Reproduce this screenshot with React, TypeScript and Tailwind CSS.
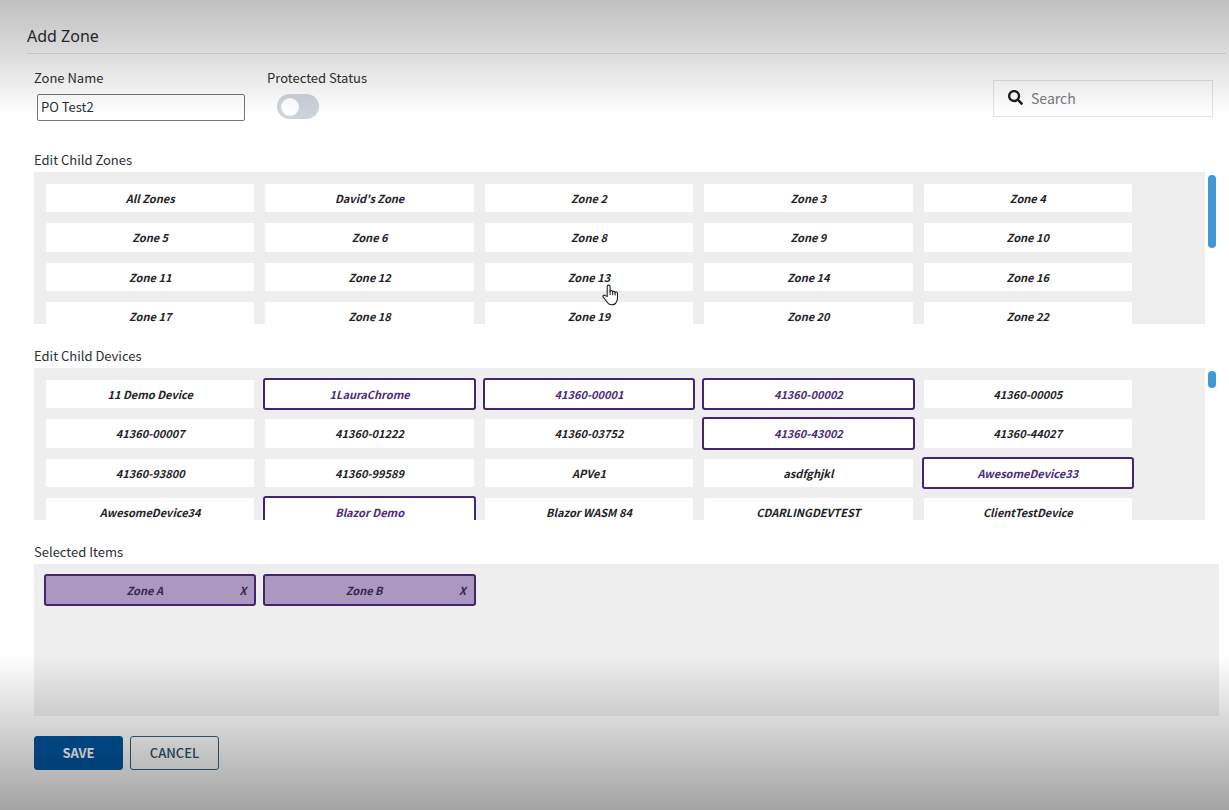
import { useState } from "react";
import type { ReactNode } from "react";
import { FaSearch } from "react-icons/fa";

const zones = [
  "All Zones", "David's Zone", "Zone 2", "Zone 3", "Zone 4",
  "Zone 5", "Zone 6", "Zone 8", "Zone 9", "Zone 10",
  "Zone 11", "Zone 12", "Zone 13", "Zone 14", "Zone 16",
  "Zone 17", "Zone 18", "Zone 19", "Zone 20", "Zone 22",
];

const devices = [
  "11 Demo Device", "1LauraChrome", "41360-00001", "41360-00002", "41360-00005",
  "41360-00007", "41360-01222", "41360-03752", "41360-43002", "41360-44027",
  "41360-93800", "41360-99589", "APVe1", "asdfghjkl", "AwesomeDevice33",
  "AwesomeDevice34", "Blazor Demo", "Blazor WASM 84", "CDARLINGDEVTEST", "ClientTestDevice",
];

const initialDevices = ["1LauraChrome", "41360-00001", "41360-00002", "41360-43002", "AwesomeDevice33", "Blazor Demo"];

function Tile({ label, active, onClick }: { label: string; active: boolean; onClick: () => void }) {
  return (
    <button
      type="button"
      aria-pressed={active}
      onClick={onClick}
      className={
        "min-w-0 cursor-pointer truncate rounded-[3px] border-2 bg-white bg-clip-padding text-[11px] font-bold italic leading-4 " +
        (active ? "border-[#42246f] text-[#4b2c7c]" : "border-transparent text-[#1f2427]")
      }
    >
      {label}
    </button>
  );
}

function Picker({ title, items, initial, thumb }: { title: string; items: string[]; initial: string[]; thumb: ReactNode }) {
  const [picked, setPicked] = useState(initial);
  const toggle = (item: string) =>
    setPicked((list) => (list.includes(item) ? list.filter((i) => i !== item) : [...list, item]));

  return (
    <section className="mb-5 mr-[13px]">
      <h2 className="text-[13px] leading-6">{title}</h2>
      <div className="flex gap-[3px]">
        <div className="h-[152px] flex-1 overflow-hidden bg-[#eeeeee] pl-[10px] pr-[71px] pt-[10px]">
          <div className="grid h-[150px] auto-rows-fr grid-cols-5 gap-[7px]">
            {items.map((item) => (
              <Tile key={item} label={item} active={picked.includes(item)} onClick={() => toggle(item)} />
            ))}
          </div>
        </div>
        <div className="w-2 pt-[3px]" aria-hidden="true">
          {thumb}
        </div>
      </div>
    </section>
  );
}

function HandCursor() {
  return (
    <svg
      className="pointer-events-none absolute left-[602px] top-[284px] h-[22px] w-[17px]"
      viewBox="0 0 17 22"
      fill="white"
      stroke="#222"
      strokeWidth="1.1"
      strokeLinejoin="round"
      strokeLinecap="round"
      aria-hidden="true"
    >
      <path d="M5.2 12.4V2.6c0-2 2.9-2 2.9 0v4.7c.4-1 2.5-.9 2.6.5.5-.9 2.3-.7 2.4.6.8-.8 2.4-.4 2.4 1.2v4.6c0 2-.8 2.7-1.3 4.1-.7 1.8-2.2 2.500-4.300 2.500-2.200 0-3.500-.7-4.500-2.300L1.300 13.200c-.8-1.300.5-2.700 1.900-1.700z" />
      <path d="M8.1 7.3v3.2M10.7 7.8v2.9M13.1 8.4v2.5" fill="none" />
    </svg>
  );
}

export default function App() {
  const [name, setName] = useState("PO Test2");
  const [selected, setSelected] = useState(["Zone A", "Zone B"]);

  return (
    <main className="relative min-h-screen bg-white pb-10 font-['Noto_Sans_CJK_SC','Noto_Sans',sans-serif] text-sm text-[#2b3034]">
      <header className="ml-[27px] mr-[3px] border-b border-[#e6e6e6] pb-[5px] pt-6">
        <h1 className="font-['Noto_Sans',sans-serif] text-base font-normal leading-6">Add Zone</h1>
      </header>

      <form className="pl-[34px]" onSubmit={(e) => e.preventDefault()}>
        <div className="mb-[27px] flex items-start pr-4 pt-3">
          <div className="w-[233px]">
            <label htmlFor="zone-name" className="block text-[13px] leading-6">Zone Name</label>
            <input
              id="zone-name"
              value={name}
              onChange={(e) => setName(e.target.value)}
              className="ml-[3px] mt-1 block h-[27px] w-[208px] rounded-[2px] border border-[#767676] bg-white px-[3px] pb-0.5 text-[13px] leading-[22px]"
            />
          </div>
          <div>
            <label htmlFor="protected" className="block text-[13px] leading-6">Protected Status</label>
            <input
              id="protected"
              type="checkbox"
              role="switch"
              className="ml-[10px] mt-1 flex h-[25px] w-[42px] cursor-pointer appearance-none items-center rounded-full bg-[#cdd3dc] px-1 before:size-[18px] before:rounded-full before:bg-white before:content-[''] checked:justify-end checked:bg-[#3f97d3]"
            />
          </div>
          <div className="ml-auto mt-[14px] flex h-[37px] w-[220px] items-center gap-2 border border-[#e3e3e3] bg-white pb-0.5 pl-[14px]">
            <FaSearch className="size-[15px] shrink-0 text-[#1b1e21]" aria-hidden="true" />
            <input
              type="search"
              aria-label="Search"
              placeholder="Search"
              className="min-w-0 flex-1 bg-transparent text-sm leading-6 outline-none placeholder:text-[#757b80]"
            />
          </div>
        </div>

        <Picker
          title="Edit Child Zones"
          items={zones}
          initial={[]}
          thumb={<div className="h-[73px] rounded-full bg-[#3f97d3]" />}
        />
        <Picker
          title="Edit Child Devices"
          items={devices}
          initial={initialDevices}
          thumb={<div className="h-[17px] rounded-full bg-[#3f97d3]" />}
        />

        <section className="mr-[10px]">
          <h2 className="text-[13px] leading-6">Selected Items</h2>
          <div className="h-[152px] bg-[#eeeeee] pl-[10px] pr-[85px] pt-[10px]">
            <ul className="grid grid-cols-5 gap-[7px]">
              {selected.map((item) => (
                <li
                  key={item}
                  className="flex h-8 items-center rounded-[3px] border-2 border-[#42246f] bg-[#aa98c0] pr-2 text-[11px] font-bold italic leading-4 text-[#35284a]"
                >
                  <span className="flex-1 pl-1 text-center">{item}</span>
                  <button
                    type="button"
                    aria-label={"Remove " + item}
                    onClick={() => setSelected((list) => list.filter((i) => i !== item))}
                    className="cursor-pointer"
                  >
                    X
                  </button>
                </li>
              ))}
            </ul>
          </div>
        </section>

        <div className="mt-5 flex gap-[7px]">
          <button
            type="submit"
            className="h-[34px] w-[89px] cursor-pointer rounded-[3px] border border-[#005a9c] bg-[#0055a0] text-[13px] font-bold leading-6 text-white"
          >
            SAVE
          </button>
          <button
            type="button"
            className="h-[34px] w-[89px] cursor-pointer rounded-[3px] border border-[#35617f] bg-white/30 text-[13px] font-medium leading-6 text-[#28526f]"
          >
            CANCEL
          </button>
        </div>
      </form>

      <div className="pointer-events-none absolute inset-x-0 top-0 h-[115px] bg-linear-to-b from-black/25 via-black/13 to-transparent" />
      <div className="pointer-events-none absolute inset-x-0 bottom-0 h-[155px] bg-linear-to-t from-black/36 to-transparent" />
      <HandCursor />
    </main>
  );
}
